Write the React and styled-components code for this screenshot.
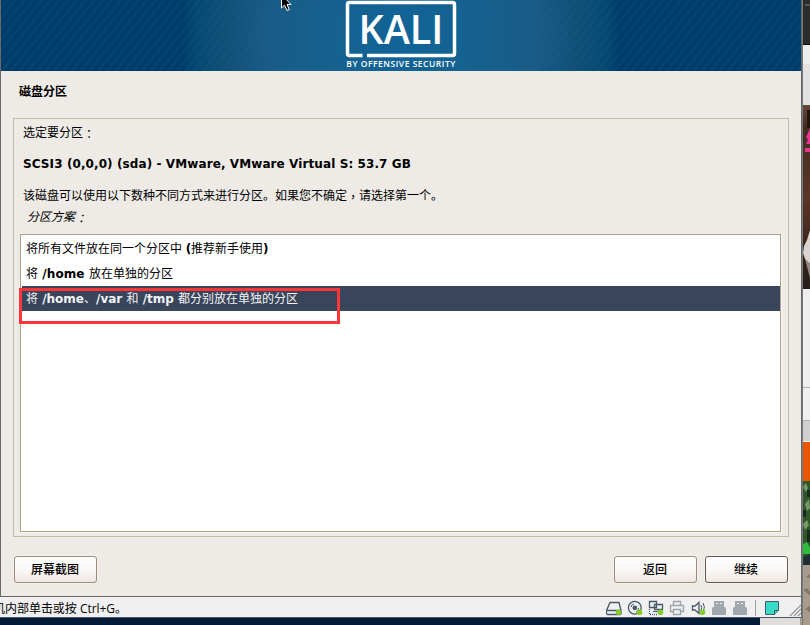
import React from 'react';
import styled, { createGlobalStyle, css } from 'styled-components';

const Global = createGlobalStyle`
  *, *::before, *::after { box-sizing: border-box; }
  body { margin: 0; overflow: hidden; background: #021a35; }
`;

const Desktop = styled.div`
  position: relative;
  width: 810px;
  height: 625px;
  display: grid;
  grid-template-columns: 802px 8px;
  grid-template-rows: 618px 7px;
  overflow: hidden;
  font: 12px/18px 'DejaVu Sans', 'Noto Sans CJK SC', sans-serif;
  color: #000;
`;

const VmWindow = styled.main`
  display: grid;
  grid-template-rows: 597px 20px;
  border-right: 1px solid #64686b;
  border-bottom: 1px solid #4d5962;
  min-height: 0;
`;

const Guest = styled.section`
  display: flex;
  flex-direction: column;
  background: #eeebe7;
  border-left: 1px solid #696969;
  border-bottom: 1px solid #686864;
`;

const Banner = styled.header`
  flex: none;
  height: 71px;
  display: flex;
  justify-content: center;
  background:
    repeating-linear-gradient(129deg, rgba(0, 115, 135, 0) 0 2.4px, rgba(0, 115, 135, 0.15) 4px 5.2px, rgba(0, 115, 135, 0) 6.8px),
    radial-gradient(ellipse 218px 260px at 400px 35px, #126399 0%, #17608f 35%, #1b5a87 62%, #124f78 80%, #074871 94%, #003c6b 100%);
`;

const PageTitle = styled.h1`
  margin: 10px 0 0 18px;
  height: 37px;
  font: 700 12px/20px 'Noto Sans CJK SC', sans-serif;
`;

const Frame = styled.section`
  margin: 0 12px;
  height: 419px;
  padding: 4px 7px 4px 6px;
  border: 1px solid #c5b9a8;
  display: flex;
  flex-direction: column;
`;

const cjk = css`
  font-family: 'Noto Sans CJK SC', sans-serif;
  font-size: 12px;
`;

const Paragraph = styled.p`
  ${cjk}
  flex: none;
  margin: 0 0 0 3px;
  height: ${(p) => p.$height}px;
  line-height: 18px;
  white-space: nowrap;
`;

const Centered = styled.span`
  font-family: 'Noto Sans CJK TC', sans-serif;
  line-height: 0;
  vertical-align: -2px;
`;

const Disk = styled.h2`
  flex: none;
  margin: 0 0 0 3px;
  height: 31px;
  font: 700 12px/18px 'DejaVu Sans', sans-serif;
  letter-spacing: 0.095px;
  white-space: nowrap;
`;

const Label = styled.p`
  ${cjk}
  flex: none;
  margin: 0 0 0 7px;
  height: 27px;
  line-height: 18px;
  font-style: italic;
`;

const OptionList = styled.ul`
  margin: 0;
  padding: 1px 0 0 1px;
  list-style: none;
  flex: 1;
  background: #fff;
  border: 1px solid #b0a08b;
  box-shadow: 1px 1px 0 #f8f6f3;
`;

const Option = styled.li`
  ${cjk}
  height: 25px;
  padding-left: 4px;
  line-height: 24px;
  white-space: pre;
  color: ${(p) => (p.$selected ? '#f2f4f6' : '#000')};
  background: ${(p) => (p.$selected ? '#39455a' : 'transparent')};
`;

const Latin = styled.b`
  font-family: 'DejaVu Sans', sans-serif;
  font-weight: 700;
  letter-spacing: ${(p) => p.$track || 0}px;
`;

const Actions = styled.footer`
  display: flex;
  gap: 8px;
  padding: 19px 13px 0;
`;

const Button = styled.button`
  width: 83px;
  height: 27px;
  padding: 0 1px 1px 0;
  margin-right: ${(p) => (p.$first ? 'auto' : '0')};
  font: 500 12px/24px 'Noto Sans CJK SC', sans-serif;
  color: #000;
  border: 1px solid ${(p) => (p.$primary ? '#665851' : '#9b8b79')};
  border-radius: 3px;
  background: linear-gradient(#fff, #faf7f6 55%, #eee7e2);
  box-shadow: 0 0 0 1px #f3f0ed;
`;

const StatusBar = styled.footer`
  display: flex;
  align-items: flex-start;
  background: #f0f0f0;
  overflow: hidden;
`;

const Hint = styled.span`
  flex: none;
  width: 613px;
  margin-left: -7px;
  padding-top: 2px;
  font: 12px/19px 'Open Sans', 'Noto Sans CJK SC', sans-serif;
  letter-spacing: -0.03px;
  white-space: nowrap;
`;

const Highlight = styled.div`
  position: absolute;
  left: 19px;
  top: 288px;
  width: 321px;
  height: 36px;
  border: 3px solid #fb3538;
`;

const Pointer = styled.svg`
  position: absolute;
  left: 281px;
  top: -6px;
`;

const Backdrop = styled.aside`
  grid-column: 2;
  grid-row: 1 / 3;
  border-left: 1px solid #77797a;
`;

const Below = styled.div`
  display: flex;
  background: #021a35;
  grid-column: 1;
  justify-content: flex-end;
`;

const Patch = styled.div`
  width: ${(p) => p.$width}px;
  background: ${(p) => p.$color};
`;

const Block = styled.svg`
  display: block;
  flex: none;
`;

function KaliLogo() {
  return (
    <Block width="112" height="71" viewBox="345 0 112 71" fill="#fff">
      <path d="M362.5 55.5H349.5Q347.5 55.5 347.5 53.5V4.5Q347.5 2.5 349.5 2.5H452.5Q454.5 2.5 454.5 4.5V53.5Q454.5 55.5 452.5 55.5H367" fill="none" stroke="#fff" strokeWidth="3.5" />
      <text x="358.4" y="43.7" fontFamily="Open Sans" fontSize="39" fontWeight="600" textLength="85" lengthAdjust="spacingAndGlyphs">KALI</text>
      <text x="346.3" y="66.7" fontFamily="Open Sans" fontSize="8.5" fontWeight="600" textLength="109" lengthAdjust="spacing">BY OFFENSIVE SECURITY</text>
    </Block>
  );
}

function DeviceIcons() {
  return (
    <Block width="195" height="20" viewBox="606 597 195 20" fill="none" stroke="#485967" strokeWidth="1.3">
      <path d="M610 602.5H619L621 610.5V613.5Q621 614.5 620 614.5H607.5Q606.5 614.5 606.5 613.5V610.5ZM607 610.5H621" />
      <circle cx="634.8" cy="607.8" r="6.4" />
      <circle cx="634.8" cy="607.8" r="1.7" fill="#485967" />
      <path d="M631 607Q631.3 604.5 633.8 604M638.5 608Q638.5 611 636 612" strokeWidth="1" />
      <path d="M649.5 601.5H656.5V607.5H649.5ZM654.5 604.5H662.5V609.5H654.5Z" fill="#f0f0f0" />
      <path d="M649.5 609V614.5H658" strokeDasharray="1 1" />
      <path d="M653 611.5H658.5V609.5" strokeWidth="1" />
      <g stroke="#9aa4aa">
        <path d="M673.5 605V601.5H680.5V605M673 611.5H670.5V605.5H683.5V611.5H681M673.5 609.5H680.5V614.5H673.5Z" />
      </g>
      <path d="M692.5 606H695L699 602.5V613.5L695 610H692.5Z" />
      <path d="M701 605Q702.4 607.5 701 610M703 603Q705.5 607 703.5 611" strokeWidth="1" />
      <g fill="#86cc24" stroke="none">
        <circle cx="618.5" cy="612.2" r="2.8" />
        <circle cx="639.5" cy="612.2" r="2.8" />
        <circle cx="660.5" cy="612.2" r="2.8" />
        <circle cx="702.5" cy="612.2" r="2.8" />
      </g>
      {[712, 733].map((x) => (
        <g key={x} stroke="none" fill="#a0a8ae">
          <path d={`M${x + 2} 601h10v6h-10z`} />
          <path d={`M${x + 1} 607h12l1 1v7h-14v-7z`} />
          <path d={`M${x + 4} 603h2v1h-2zM${x + 8} 603h2v1h-2z`} fill="#f0f0f0" />
        </g>
      ))}
      <path d="M755.5 600V616" stroke="#a0a0a0" strokeWidth="1" />
      <path d="M765.5 601.5H778.5V610.5L774.5 614.5H765.5Z" fill="#36dcc8" strokeWidth="1" />
      <path d="M774.5 614.5V610.5H778.5" fill="#36dcc8" strokeWidth="1" />
      <path d="M790 616L801 605M794 616L801 609M798 616L801 613" stroke="#949494" strokeWidth="1.2" />
    </Block>
  );
}

function BackdropStrip() {
  return (
    <Block width="7" height="625" viewBox="0 0 7 625">
      <defs>
        <linearGradient id="wood" x1="0" x2="0" y1="0" y2="1">
          <stop stopColor="#65483b" />
          <stop offset=".12" stopColor="#422c22" />
          <stop offset=".5" stopColor="#593628" />
          <stop offset=".8" stopColor="#3b2219" />
          <stop offset="1" stopColor="#251e1b" />
        </linearGradient>
      </defs>
      <path fill="#eee" d="M0 0H7V625H0Z" />
      <path fill="#2c2c2c" d="M0 0H7V44H0Z" />
      <path fill="#555" d="M2 4H7V6H2Z" />
      <path fill="#080808" d="M0 44H7V45H0Z" />
      <path fill="#e2e2e2" d="M0 64H7V105H0Z" />
      <path fill="url(#wood)" d="M0 105H7V289H0Z" />
      <path fill="#211510" d="M4 110H7V128H4Z" />
      <path fill="#e73790" d="M7 128L5 133L3 137L5 140L3 144H7ZM2 148H7V152H2Z" />
      <path fill="#d9d4d1" d="M7 230L4 240L1 246L0 253L2 259L7 264Z" />
      <path fill="#918985" d="M2 259L7 264V278Z" />
      <path fill="#b0b0b0" d="M0 387H7V388H0ZM0 420H7V421H0Z" />
      <path fill="#d0d0d0" d="M0 421H7V441H0Z" />
      <path fill="#ea5600" d="M0 442H7V481H0Z" />
      <path fill="#315629" d="M0 481H7V565H0Z" />
      <path fill="#78976a" d="M0 487L3 483L5 488L3 492ZM2 504L6 499L7 508L4 511ZM0 524L4 520L6 525L2 530Z" />
      <path fill="#162b19" d="M4 490H7V497H4ZM0 510H3V517H0ZM4 530H7V542H4Z" />
      <path fill="#30bb3c" d="M0 544L4 542L7 548V554H0Z" />
      <path fill="#202e36" d="M0 557L7 554V565H0Z" />
      <path fill="#a79b8c" d="M0 565H7V625H0Z" />
      <path fill="#82776b" d="M3 577L7 574V578ZM0 590L4 588L7 592V595ZM2 609L7 606V612Z" />
    </Block>
  );
}

export default function App() {
  return (
    <Desktop>
      <Global />
      <VmWindow>
        <Guest>
          <Banner><KaliLogo /></Banner>
          <PageTitle>磁盘分区</PageTitle>
          <Frame>
            <Paragraph $height={32}>选定要分区<Centered lang="zh-TW">：</Centered></Paragraph>
            <Disk>SCSI3 (0,0,0) (sda) - VMware, VMware Virtual S: 53.7 GB</Disk>
            <Paragraph $height={21}>
              该磁盘可以使用以下数种不同方式来进行分区。如果您不确定<Centered lang="zh-TW">，</Centered>请选择第一个。
            </Paragraph>
            <Label>分区方案<Centered lang="zh-TW">：</Centered></Label>
            <OptionList>
              <Option>将所有文件放在同一个分区中<Latin $track={-0.4}> (</Latin>推荐新手使用<Latin $track={-0.4}>)</Latin></Option>
              <Option>将<Latin $track={0.1}> /home </Latin>放在单独的分区</Option>
              <Option $selected>将<Latin> /home</Latin>、<Latin>/var </Latin>和<Latin> /tmp </Latin>都分别放在单独的分区</Option>
            </OptionList>
          </Frame>
          <Actions>
            <Button $first>屏幕截图</Button>
            <Button>返回</Button>
            <Button $primary>继续</Button>
          </Actions>
        </Guest>
        <StatusBar>
          <Hint>机内部单击或按 Ctrl+G。</Hint>
          <DeviceIcons />
        </StatusBar>
      </VmWindow>
      <Backdrop><BackdropStrip /></Backdrop>
      <Below>
        <Patch $width={40} $color="#dedede" />
        <Patch $width={2} $color="#a79b8c" />
      </Below>
      <Highlight />
      <Pointer width="11" height="18" viewBox="0 0 11 18">
        <path d="M.5 .5V14L3.5 11.2L6 16.5L8.3 15.5L6 10.5H10Z" fill="#000" stroke="#fff" />
      </Pointer>
    </Desktop>
  );
}
